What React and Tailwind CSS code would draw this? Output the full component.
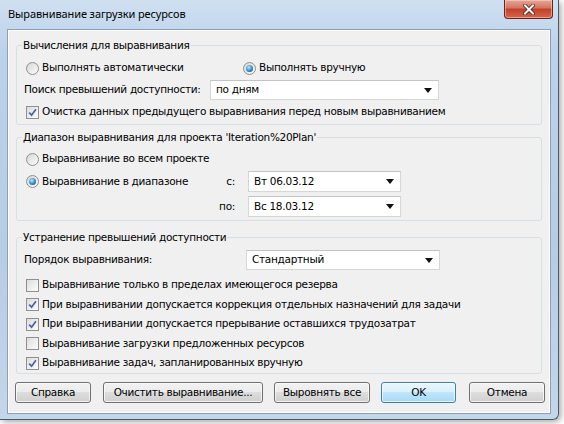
import React from 'react';

const ui = "font-['DejaVu_Sans',sans-serif] text-[10.5px] tracking-[-0.3px] text-black";

function Radio({ checked, label }) {
  return (
    <div className="flex h-[16px] items-center">
      <span className="flex h-[13px] w-[13px] shrink-0 items-center justify-center rounded-full border border-[#8f8f8f] bg-[linear-gradient(135deg,#d6d6d6,#fcfcfc)]">
        {checked && (
          <span className="h-[7px] w-[7px] rounded-full bg-[radial-gradient(circle_at_40%_35%,#b4ecff,#2a7fc0_60%,#123f6e)]" />
        )}
      </span>
      <span className="ml-[3px] whitespace-nowrap">{label}</span>
    </div>
  );
}

function Check({ checked, label }) {
  return (
    <div className="flex h-[16px] items-center">
      <span className="flex h-[13px] w-[13px] shrink-0 items-center justify-center border border-[#8f8f8f] bg-[linear-gradient(135deg,#dcdcdc,#fdfdfd)]">
        {checked && (
          <svg width="9" height="9" viewBox="0 0 9 9">
            <path d="M1.2 4.6 L3.6 7.2 L7.9 1.2" fill="none" stroke="#4c62a3" strokeWidth="1.7" />
          </svg>
        )}
      </span>
      <span className="ml-[3px] whitespace-nowrap">{label}</span>
    </div>
  );
}

function Combo({ value, className }) {
  return (
    <div className={`flex items-center justify-between border border-[#d6d6d6] border-t-[#c4c4c4] bg-white pl-[5px] pr-[6px] ${className}`}>
      <span className="whitespace-nowrap">{value}</span>
      <svg width="8" height="5" viewBox="0 0 8 5">
        <path d="M0 0 H8 L4 5 Z" fill="#111" />
      </svg>
    </div>
  );
}

function Group({ title, children, className = '' }) {
  return (
    <fieldset className={`mx-[8px] rounded-[3px] border border-[#d5dfe5] px-[7px] ${className}`}>
      <legend className="ml-[-2px] h-[14px] px-[1px] leading-[14px]">{title}</legend>
      {children}
    </fieldset>
  );
}

function Button({ children, primary, className = '' }) {
  const skin = primary
    ? 'border-[#3c7fb1] bg-[linear-gradient(#eaf6fd,#d9f0fc_50%,#bee6fd_50%,#a7d9f5)]'
    : 'border-[#707070] bg-[linear-gradient(#f2f2f2,#ebebeb_50%,#dddddd_50%,#cfcfcf)]';
  return (
    <button className={`flex h-[21px] items-center justify-center rounded-[3px] border shadow-[inset_0_0_0_1px_rgba(255,255,255,0.7)] ${skin} ${className}`}>
      {children}
    </button>
  );
}

export default function App() {
  return (
    <div className="h-[424px] w-[564px] overflow-hidden bg-white">
      <div className="flex h-[420px] w-[559px] flex-col rounded-br-[6px] border-r border-b border-[#4a5a6a] bg-[linear-gradient(180deg,#cfe0f1,#bcd2ea_12%,#b7cde4_60%,#c3d6ea)] pl-[7px] pr-[7px] pb-[5px] shadow-[2px_2px_6px_rgba(0,0,0,0.35)]">
        <div className="flex h-[29px] shrink-0 items-start justify-between">
          <span className="mt-[6px] ml-[1px] font-['Noto_Sans',sans-serif] text-[11px] leading-[16px] tracking-[-0.1px] text-black">
            Выравнивание загрузки ресурсов
          </span>
          <div className="mr-[-2px] flex h-[19px] w-[49px] items-center justify-center rounded-b-[4px] border border-t-0 border-[#6b2318] bg-[linear-gradient(#e7a697,#d5735f_45%,#c2402a_50%,#d8644c)] shadow-[inset_0_0_0_1px_rgba(255,220,210,0.5)]">
            <svg width="12" height="11" viewBox="0 0 12 11">
              <path d="M2 1.5 L10 9.5 M10 1.5 L2 9.5" stroke="#4a1a14" strokeWidth="3.6" strokeLinecap="square" />
              <path d="M2 1.5 L10 9.5 M10 1.5 L2 9.5" stroke="#ffffff" strokeWidth="2" strokeLinecap="square" />
            </svg>
          </div>
        </div>

        <div className={`flex flex-1 flex-col border border-[#8aa0b8] bg-[#f0f0f0] shadow-[inset_0_0_0_1px_#ffffff] pt-[8px] ${ui}`}>
          <Group title="Вычисления для выравнивания" className="pb-[4px]">
            <div className="mt-[8px] flex pl-[2px]">
              <div className="w-[217px]">
                <Radio label="Выполнять автоматически" />
              </div>
              <Radio checked label="Выполнять вручную" />
            </div>
            <div className="mt-[4px] flex h-[20px] items-center">
              <span className="w-[186px] whitespace-nowrap">Поиск превышений доступности:</span>
              <Combo value="по дням" className="h-[20px] w-[229px]" />
            </div>
            <div className="mt-[4px] pl-[2px]">
              <Check checked label="Очистка данных предыдущего выравнивания перед новым выравниванием" />
            </div>
          </Group>

          <Group title="Диапазон выравнивания для проекта 'Iteration%20Plan'" className="mt-[5px] pb-[3px]">
            <div className="mt-[7px] pl-[2px]">
              <Radio label="Выравнивание во всем проекте" />
            </div>
            <div className="mt-[4px] flex h-[21px] items-center pl-[2px]">
              <div className="w-[188px]">
                <Radio checked label="Выравнивание в диапазоне" />
              </div>
              <span className="w-[21px] text-right">с:</span>
              <Combo value="Вт 06.03.12" className="ml-[13px] h-[21px] w-[153px]" />
            </div>
            <div className="mt-[4px] flex h-[21px] items-center pl-[2px]">
              <span className="ml-[188px] w-[21px] text-right">по:</span>
              <Combo value="Вс 18.03.12" className="ml-[13px] h-[21px] w-[153px]" />
            </div>
          </Group>

          <Group title="Устранение превышений доступности" className="mt-[9px] pb-[2px]">
            <div className="mt-[6px] flex h-[20px] items-center">
              <span className="w-[222px] whitespace-nowrap">Порядок выравнивания:</span>
              <Combo value="Стандартный" className="h-[20px] w-[194px]" />
            </div>
            <div className="mt-[7px] flex flex-col gap-[3.5px] pl-[2px]">
              <Check label="Выравнивание только в пределах имеющегося резерва" />
              <Check checked label="При выравнивании допускается коррекция отдельных назначений для задачи" />
              <Check checked label="При выравнивании допускается прерывание оставшихся трудозатрат" />
              <Check label="Выравнивание загрузки предложенных ресурсов" />
              <Check checked label="Выравнивание задач, запланированных вручную" />
            </div>
          </Group>

          <div className="mt-[8px] flex pl-[7px]">
            <Button className="w-[76px]">Справка</Button>
            <Button className="ml-[12px] w-[160px]">Очистить выравнивание...</Button>
            <Button className="ml-[11px] w-[96px]">Выровнять все</Button>
            <Button primary className="ml-[11px] w-[75px]">OK</Button>
            <Button className="ml-[13px] w-[76px]">Отмена</Button>
          </div>
        </div>
      </div>
    </div>
  );
}
